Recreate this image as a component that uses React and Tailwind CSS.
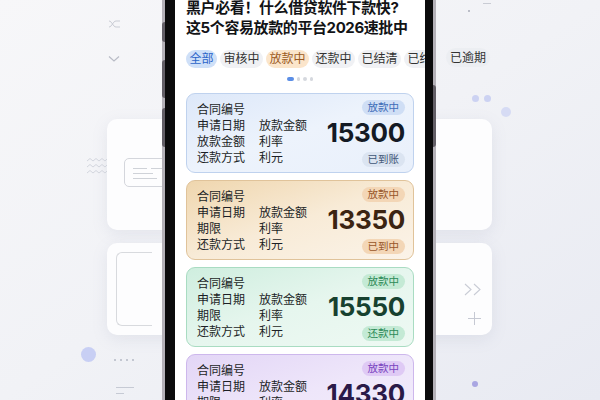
import React from 'react';

const THEMES = {
    blue: {
        card: 'bg-gradient-to-br from-[#dde8f9] via-[#edf3fc] to-[#e9f0fb] border-[#bfd2ee]',
        badge: 'bg-[#cfdef5] text-[#3d6cb8]',
        foot: 'bg-[#dbe4f1] text-[#3f5677]',
        num: 'text-[#141a24]',
    },
    tan: {
        card: 'bg-gradient-to-br from-[#efd6ae] via-[#f8ebd7] to-[#fbf3e8] border-[#e0c39a]',
        badge: 'bg-[#f3d6b6] text-[#98572a]',
        foot: 'bg-[#f3d6b6] text-[#98572a]',
        num: 'text-[#3b2412]',
    },
    green: {
        card: 'bg-gradient-to-br from-[#cfeedf] via-[#e6f6ee] to-[#eef9f3] border-[#a9dcc2]',
        badge: 'bg-[#c4ead5] text-[#2d8a58]',
        foot: 'bg-[#c4ead5] text-[#2d8a58]',
        num: 'text-[#17412f]',
    },
    purple: {
        card: 'bg-gradient-to-br from-[#e3d6f6] via-[#eee6fa] to-[#f3eefb] border-[#cdb7ec]',
        badge: 'bg-[#dfcaf5] text-[#7a45bf]',
        foot: 'bg-[#dfcaf5] text-[#7a45bf]',
        num: 'text-[#2a1a48]',
    },
};

const LOANS = [
    { theme: 'blue', third: '放款金额', amount: '15300', status: '已到账' },
    { theme: 'tan', third: '期限', amount: '13350', status: '已到中' },
    { theme: 'green', third: '期限', amount: '15550', status: '还款中' },
    { theme: 'purple', third: '期限', amount: '14330', status: '还款中' },
];

// the last chip runs past the screen edge and gets clipped
const CHIPS = [
    { label: '全部', cls: 'bg-[#cfe0f8] text-[#2c64c8]' },
    { label: '审核中', cls: 'bg-[#f0f1f4] text-[#333]' },
    { label: '放款中', cls: 'bg-[#fbe5cb] text-[#9a5a24]' },
    { label: '还款中', cls: 'bg-[#f0f1f4] text-[#333]' },
    { label: '已结清', cls: 'bg-[#f0f1f4] text-[#333]' },
    { label: '已终止', cls: 'bg-[#f0f1f4] text-[#333]' },
];

const LoanCard = ({ loan }) => {
    const t = THEMES[loan.theme];
    return (
        <div className={`h-[80px] rounded-[9px] border flex justify-between pl-[10px] pr-[8px] pt-[6px] pb-[5px] ${t.card}`}>
            <div className="grid grid-cols-[62px_1fr] content-start pt-[2px] text-[12px] leading-[16.3px] text-[#1c1f26]">
                <span className="col-span-2">合同编号</span>
                <span>申请日期</span>
                <span>放款金额</span>
                <span>{loan.third}</span>
                <span>利率</span>
                <span>还款方式</span>
                <span>利元</span>
            </div>
            <div className="flex flex-col items-end justify-between">
                <span className={`rounded-full px-[6px] h-[15px] leading-[15px] text-[10.5px] ${t.badge}`}>放款中</span>
                <span className={`text-[26px] leading-none font-bold tracking-[-0.3px] ${t.num}`}>{loan.amount}</span>
                <span className={`rounded-full px-[6px] h-[15px] leading-[15px] text-[10.5px] ${t.foot}`}>{loan.status}</span>
            </div>
        </div>
    );
};

const Backdrop = () => (
    <div className="absolute inset-0">
        {/* soft cards behind the phone */}
        <div className="absolute left-[107px] top-[119px] w-[385px] h-[111px] rounded-[10px] bg-[#fdfdfe] shadow-[0_4px_16px_rgba(120,130,165,0.13)]" />
        <div className="absolute left-[107px] top-[243px] w-[385px] h-[92px] rounded-[10px] bg-[#fdfdfe] shadow-[0_4px_16px_rgba(120,130,165,0.13)]" />

        {/* doc icon in first card */}
        <div className="absolute left-[124px] top-[158px] w-[48px] h-[29px] rounded-[5px] border border-[#d4d6dc]">
            <div className="absolute left-[8px] top-[9px] w-[14px] h-px bg-[#cfd2d8]" />
            <div className="absolute left-[8px] top-[14px] w-[20px] h-px bg-[#cfd2d8]" />
            <div className="absolute left-[8px] top-[19px] w-[24px] h-px bg-[#cfd2d8]" />
            <div className="absolute left-[26px] top-[9px] w-[12px] h-px bg-[#cfd2d8]" />
        </div>
        {/* open frame in second card */}
        <div className="absolute left-[116px] top-[252px] w-[36px] h-[74px] rounded-l-[6px] border-l border-t border-b border-[#d8dade]" />

        <svg className="absolute left-[86px] top-[157px]" width="22" height="20" viewBox="0 0 22 20" fill="none" stroke="#d3d6de" strokeWidth="1">
            <path d="M1 4 L4 1.5 L7 4 L10 1.5 L13 4 L16 1.5 L19 4 L21 2" />
            <path d="M1 10 L4 7.5 L7 10 L10 7.5 L13 10 L16 7.5 L19 10 L21 8" />
            <path d="M1 16 L4 13.5 L7 16 L10 13.5 L13 16 L16 13.5 L19 16 L21 14" />
        </svg>
        <svg className="absolute left-[108px] top-[18px]" width="14" height="12" viewBox="0 0 14 12" fill="none" stroke="#c9ccd4" strokeWidth="1">
            <path d="M1 3 C4 3 5 9 8 9 L12 9" />
            <path d="M1 9 C4 9 5 3 8 3 L12 3" />
        </svg>
        <svg className="absolute left-[108px] top-[55px]" width="12" height="8" viewBox="0 0 12 8" fill="none" stroke="#b9bcc6" strokeWidth="1.2">
            <path d="M1 1.5 L6 6 L11 1.5" />
        </svg>

        <div className="absolute left-[81px] top-[347px] w-[15px] h-[15px] rounded-full bg-[#c8cff4]" />
        <div className="absolute left-[114px] top-[359px] flex gap-[4px]">
            <span className="w-[2px] h-[2px] rounded-full bg-[#b5b9c4]" />
            <span className="w-[2px] h-[2px] rounded-full bg-[#b5b9c4]" />
            <span className="w-[2px] h-[2px] rounded-full bg-[#b5b9c4]" />
            <span className="w-[2px] h-[2px] rounded-full bg-[#b5b9c4]" />
        </div>
        <div className="absolute left-[116px] top-[387px] w-[18px] h-px bg-[#c6cad4]" />
        <div className="absolute left-[116px] top-[393px] w-[8px] h-px bg-[#c6cad4]" />

        <svg className="absolute left-[464px] top-[283px]" width="19" height="13" viewBox="0 0 19 13" fill="none" stroke="#c9ccd5" strokeWidth="1.1">
            <path d="M1 1 L7 6.5 L1 12" />
            <path d="M10 1 L16 6.5 L10 12" />
        </svg>
        <svg className="absolute left-[468px] top-[312px]" width="13" height="13" viewBox="0 0 13 13" fill="none" stroke="#c6c9d3" strokeWidth="1">
            <path d="M6.5 0 L6.5 13 M0 6.5 L13 6.5" />
        </svg>

        <div className="absolute left-[472px] top-[95px] w-[7px] h-[7px] rounded-full bg-[#ccd2f2]" />
        <div className="absolute left-[484px] top-[95px] w-[7px] h-[7px] rounded-full bg-[#ccd2f2]" />
        <div className="absolute left-[501px] top-[107px] w-[10px] h-[10px] rounded-full bg-[#d6dbf4]" />
        <div className="absolute left-[472px] top-[381px] w-[6px] h-[6px] rounded-full bg-[#a9a6e2]" />
        <div className="absolute left-[483px] top-[3px] w-[8px] h-px bg-[#c9ccd4]" />
        <div className="absolute left-[468px] top-[10px] w-[2px] h-[2px] rounded-full bg-[#a9adb8]" />

        <span className="absolute left-[446px] top-[48px] h-[19px] leading-[19px] px-[4px] rounded-full bg-[#eceef2] text-[12px] text-[#333]">已逾期</span>
    </div>
);

const Phone = () => (
    <div className="absolute left-[162px] top-[-40px] h-[490px] flex">
        {/* side keys */}
        <div className="absolute left-0 top-[62px] w-[3px] h-[20px] bg-[#625e66] rounded-l-sm" />
        <div className="absolute left-0 top-[100px] w-[3px] h-[38px] bg-[#625e66] rounded-l-sm" />
        <div className="absolute left-0 top-[148px] w-[3px] h-[39px] bg-[#625e66] rounded-l-sm" />
        <div className="absolute right-0 top-[125px] w-[3px] h-[62px] bg-[#625e66] rounded-r-sm" />

        <div className="flex bg-[#b4b1b8] px-[3px]">
            <div className="flex bg-[#0b0b0c] pl-[10px] pr-[8px]">
                <div className="w-[250px] bg-white overflow-hidden pt-[38px]">
                    <div className="px-[11px] text-[15px] leading-[19.5px] font-bold text-[#121316] tracking-[-0.4px]">
                        <div>黑户必看！什么借贷软件下款快?</div>
                        <div>这5个容易放款的平台2026速批中</div>
                    </div>

                    <div className="mt-[13px] pl-[11px] flex gap-[3px] whitespace-nowrap">
                        {CHIPS.map((c) => (
                            <span key={c.label} className={`shrink-0 h-[18px] leading-[18px] px-[3.5px] rounded-full text-[12px] ${c.cls}`}>
                                {c.label}
                            </span>
                        ))}
                    </div>

                    <div className="mt-[9px] flex justify-center items-center gap-[3px]">
                        <span className="w-[7px] h-[3.5px] rounded-full bg-[#5b8ee6]" />
                        <span className="w-[3.5px] h-[3.5px] rounded-full bg-[#d5d8de]" />
                        <span className="w-[3.5px] h-[3.5px] rounded-full bg-[#d5d8de]" />
                        <span className="w-[3.5px] h-[3.5px] rounded-full bg-[#d5d8de]" />
                    </div>

                    <div className="mt-[12px] px-[11px] flex flex-col gap-[7px]">
                        {LOANS.map((loan) => (
                            <LoanCard key={loan.amount} loan={loan} />
                        ))}
                    </div>
                </div>
            </div>
        </div>
    </div>
);

export default function App() {
    return (
        <div
            className="relative w-[600px] h-[400px] overflow-hidden bg-gradient-to-br from-[#f7f7f9] via-[#f1f2f6] to-[#e8eaf2]"
            style={{ fontFamily: 'Inter, "Noto Sans CJK SC", sans-serif' }}
        >
            <Backdrop />
            <Phone />
        </div>
    );
}
